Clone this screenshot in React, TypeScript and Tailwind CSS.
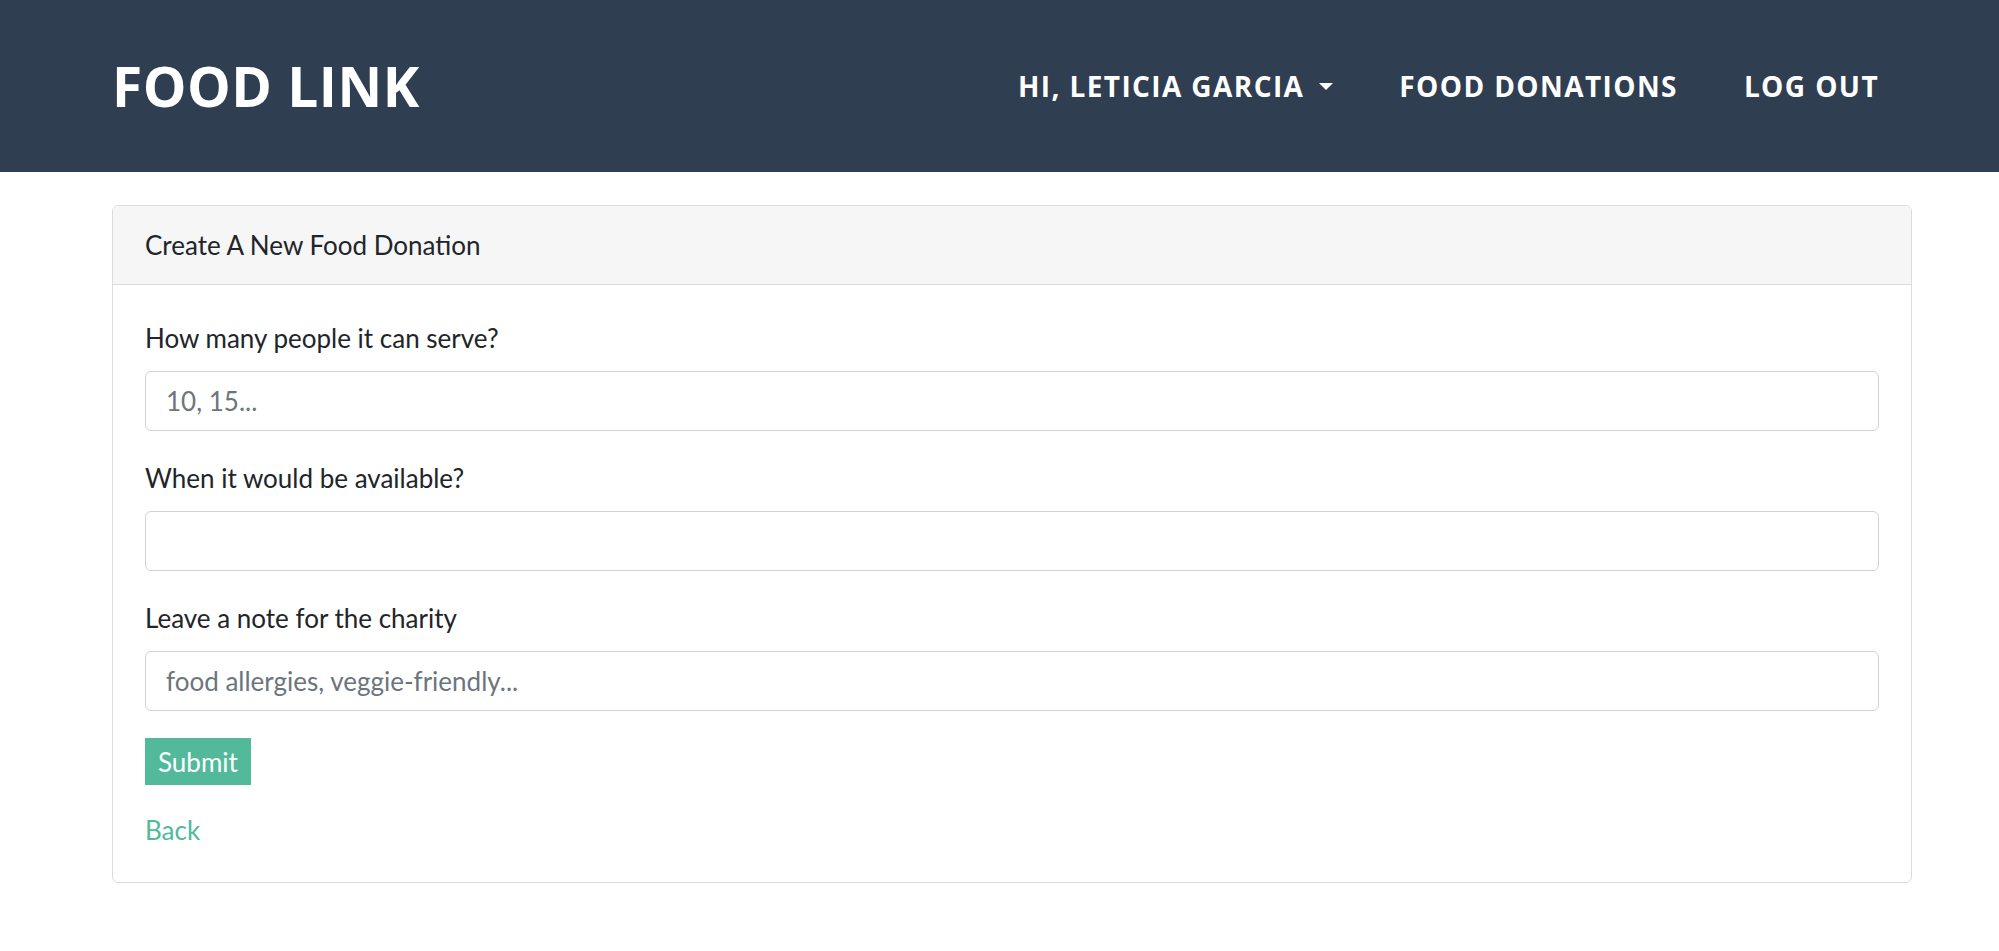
import * as React from "react";

const navFont = { fontFamily: '"Open Sans", "DejaVu Sans", sans-serif' };

function NavBar() {
  return (
    <header className="h-[172px] bg-[#2f3e50] text-white" style={navFont}>
      <div className="ml-[112px] mr-[87px] flex h-full items-center justify-between">
        <a href="#" className="-mt-[2px] text-[55px] font-bold leading-none tracking-[0.5px]">
          FOOD LINK
        </a>
        <nav className="flex items-center text-[28px] font-bold uppercase tracking-[1.4px]">
          <a href="#" className="flex items-center px-[33px]">
            Hi, Leticia Garcia
            <span className="ml-[15px] h-0 w-0 border-x-[7px] border-t-[7px] border-x-transparent border-t-white" />
          </a>
          <a href="#" className="px-[33px]">
            Food Donations
          </a>
          <a href="#" className="pl-[33px] pr-[33px]">
            Log Out
          </a>
        </nav>
      </div>
    </header>
  );
}

interface FieldProps {
  label: string;
  placeholder?: string;
}

function Field({ label, placeholder }: FieldProps) {
  return (
    <div className="mb-[28px]">
      <label className="mb-[13px] block leading-[39px]">{label}</label>
      <input
        type="text"
        placeholder={placeholder}
        className="block h-[60px] w-full rounded-[6px] border border-[#ced4da] bg-white px-[20px] text-[26px] text-[#495057] placeholder:text-[#6c757d] focus:outline-none"
      />
    </div>
  );
}

export default function App() {
  return (
    <div
      className="min-h-[951px] bg-white text-[26px] text-[#212529]"
      style={{ fontFamily: 'Lato, "Open Sans", sans-serif' }}
    >
      <NavBar />
      <main className="ml-[112px] mr-[87px] pt-[33px]">
        <div className="overflow-hidden rounded-[6px] border border-[#dcdcdc]">
          {/* Card header */}
          <div className="border-b border-[#dcdcdc] bg-[#f6f6f6] px-[32px] pt-[20px] pb-[19px] leading-[39px]">
            Create A New Food Donation
          </div>

          {/* Card body */}
          <div className="px-[32px] pt-[34px] pb-[32px]">
            <form onSubmit={(e) => e.preventDefault()}>
              <Field label="How many people it can serve?" placeholder="10, 15..." />
              <Field label="When it would be available?" />
              <Field label="Leave a note for the charity" placeholder="food allergies, veggie-friendly..." />
              <button
                type="submit"
                className="-mt-px h-[47px] bg-[#52b99b] px-[13px] text-[26px] leading-none text-white"
              >
                Submit
              </button>
            </form>
            <a href="#" className="mt-[26px] block w-fit leading-[39px] text-[#52b99b]">
              Back
            </a>
          </div>
        </div>
      </main>
    </div>
  );
}
